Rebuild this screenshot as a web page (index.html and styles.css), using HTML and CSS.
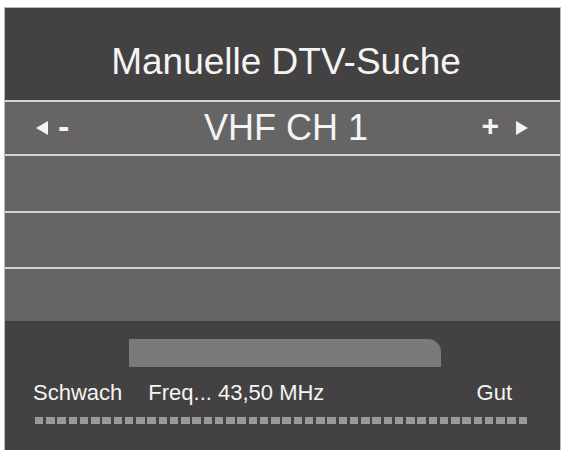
FILE: index.html
```html
<!DOCTYPE html>
<html lang="de">
<head>
<meta charset="utf-8">
<title>Manuelle DTV-Suche</title>
<link rel="stylesheet" href="styles.css">
</head>
<body>
<div class="panel">
  <div class="title">Manuelle DTV-Suche</div>
  <div class="row row-channel">
    <div class="ctrl ctrl-left">
      <svg class="tri" width="12" height="14" viewBox="0 0 12 14"><polygon points="0,7 12,0 12,14" fill="#f2f2f2"/></svg>
      <span class="sign">-</span>
    </div>
    <div class="channel">VHF CH 1</div>
    <div class="ctrl ctrl-right">
      <span class="sign plus">+</span>
      <svg class="tri" width="12" height="14" viewBox="0 0 12 14"><polygon points="0,0 12,7 0,14" fill="#f2f2f2"/></svg>
    </div>
  </div>
  <div class="row row-empty r2"></div>
  <div class="row row-empty r3"></div>
  <div class="row row-empty r4"></div>
  <div class="signal">
    <div class="level"></div>
    <div class="labels">
      <span class="weak">Schwach</span>
      <span class="freq">Freq... 43,50 MHz</span>
      <span class="good">Gut</span>
    </div>
    <div class="dots"></div>
  </div>
</div>
</body>
</html>
```

FILE: styles.css
```css
html, body {
  margin: 0;
  padding: 0;
  background: #ffffff;
}

body {
  font-family: "Liberation Sans", Arial, sans-serif;
  color: #f4f4f4;
}

.panel {
  margin: 8px 0 0 5px;
  width: 555px;
  height: 442px;
  background: #434142;
  display: flex;
  flex-direction: column;
  box-shadow: 0 0 0 1px #b9b9b9;
}

.title {
  height: 77px;
  padding: 15px 0 0 7px;
  display: flex;
  align-items: center;
  justify-content: center;
  font-size: 37px;
  line-height: 37px;
}

.row {
  background: #666465;
  border-top: 2px solid #d2d2d2;
}

.row-channel {
  height: 52px;
  display: grid;
  grid-template-columns: 1fr auto 1fr;
  align-items: center;
}

.channel {
  font-size: 36px;
  line-height: 36px;
  padding-left: 7px;
}

.ctrl {
  display: flex;
  align-items: center;
}

.ctrl-left {
  justify-self: start;
  padding-left: 31px;
  gap: 10px;
}

.ctrl-right {
  justify-self: end;
  padding-right: 32px;
  gap: 17px;
}

.tri {
  display: block;
  filter: blur(0.4px);
}

.sign {
  font-size: 34px;
  line-height: 34px;
  font-weight: bold;
  position: relative;
  top: -2px;
}

.plus {
  font-size: 30px;
  line-height: 30px;
}

.r2 { height: 55px; }
.r3 { height: 54px; }
.r4 { height: 52px; }

.signal {
  flex: 1;
  display: flex;
  flex-direction: column;
}

.level {
  margin: 18px 0 0 124px;
  width: 312px;
  height: 28px;
  background: #7b797a;
  border-top-right-radius: 13px;
}

.labels {
  margin-top: 15px;
  display: flex;
  font-size: 22px;
  line-height: 22px;
  padding: 0 48px 0 28px;
}

.freq {
  margin-left: 26px;
}

.good {
  margin-left: auto;
}

.dots {
  margin: 13px 0 0 30px;
  width: 493px;
  height: 7px;
  background: repeating-linear-gradient(90deg, #9a9899 0 8.5px, transparent 8.5px 11.25px);
  filter: blur(0.5px);
}
```
